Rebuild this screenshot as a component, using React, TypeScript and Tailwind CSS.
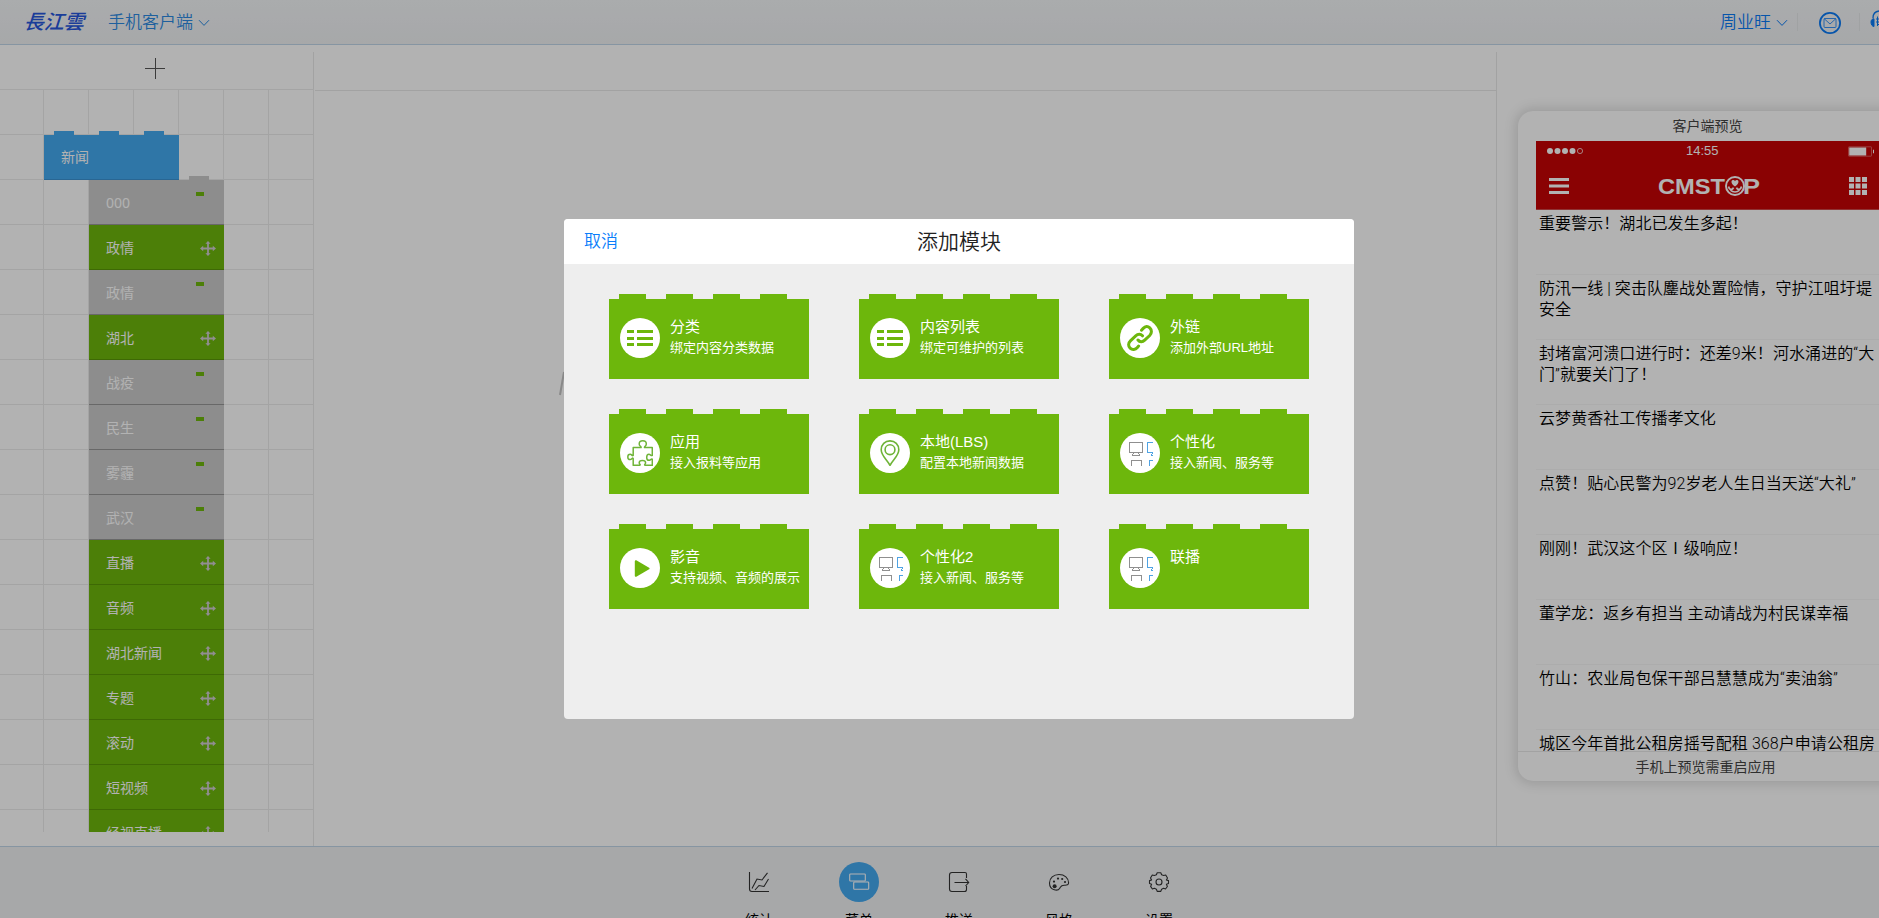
import type { ReactNode } from "react";

const UI_FONT = "font-['Liberation_Sans','Noto_Sans_CJK_SC',sans-serif]";

type MenuItem = { label: string; hidden?: boolean; stud?: boolean };

const menuItems: MenuItem[] = [
  { label: "000", hidden: true, stud: true },
  { label: "政情" },
  { label: "政情", hidden: true },
  { label: "湖北" },
  { label: "战疫", hidden: true },
  { label: "民生", hidden: true },
  { label: "雾霾", hidden: true },
  { label: "武汉", hidden: true },
  { label: "直播" },
  { label: "音频" },
  { label: "湖北新闻" },
  { label: "专题" },
  { label: "滚动" },
  { label: "短视频" },
  { label: "经视直播" },
];

const news = [
  "重要警示！湖北已发生多起！",
  "防汛一线 | 突击队鏖战处置险情，守护江咀圩堤安全",
  "封堵富河溃口进行时：还差9米！河水涌进的“大门”就要关门了！",
  "云梦黄香社工传播孝文化",
  "点赞！贴心民警为92岁老人生日当天送“大礼”",
  "刚刚！武汉这个区Ⅰ级响应！",
  "董学龙：返乡有担当 主动请战为村民谋幸福",
  "竹山：农业局包保干部吕慧慧成为“卖油翁”",
  "城区今年首批公租房摇号配租 368户申请公租房",
];

function Chevron() {
  return (
    <svg width="12" height="8" viewBox="0 0 12 8" fill="none" stroke="currentColor" strokeWidth="1">
      <path d="M1 1.2 L6 6.4 L11 1.2" />
    </svg>
  );
}

function MoveIcon() {
  return (
    <svg width="16" height="15" viewBox="0 0 16 15" className="mt-0.5 text-[#d0cbd0]" fill="currentColor">
      <path d="M8 0 L10.6 2.7 H8.9 V6.6 H12.8 V4.8 L16 7.5 L12.8 10.2 V8.4 H8.9 V12.3 H10.6 L8 15 L5.4 12.3 H7.1 V8.4 H3.2 V10.2 L0 7.5 L3.2 4.8 V6.6 H7.1 V2.7 H5.4 Z" />
    </svg>
  );
}

function ListIcon() {
  return (
    <svg width="26" height="26" viewBox="0 0 26 26" fill="#6db70c">
      <path d="M0 5h7v3H0zM10 5h16v3H10zM0 12h7v3H0zM10 12h16v3H10zM0 18h7v3H0zM10 18h16v3H10z" />
    </svg>
  );
}

function LinkIcon() {
  return (
    <svg width="26" height="26" viewBox="0 0 26 26" fill="none" stroke="#6db70c" strokeWidth="3" strokeLinecap="round">
      <path d="M14.5 5.2 L16.2 3.4 C18.3 1.1 20.8 1 22.8 2.9 C25 5 24.9 8.2 22.7 10.5 L17.7 15.2 C15.6 17.2 12.6 17.1 11 15" />
      <path d="M15.5 10.8 C13.7 8.8 10.8 8.9 8.7 10.8 L3.4 15.8 C1.1 18 1.1 21.2 3.1 23.1 C5.3 25.1 8.3 24.8 10.4 22.4 L11.6 21.1" />
    </svg>
  );
}

function PuzzleIcon() {
  return (
    <svg width="26" height="26" viewBox="0 0 26 26" fill="none" stroke="#6fb438" strokeWidth="1.5" strokeLinejoin="round">
      <path d="M6.2 7.5 H14.1 C14.5 6.3 12.2 6.2 12.2 3.9 C12.2 2 13.8 .8 15.8 .8 C17.8 .8 19.3 2 19.3 3.9 C19.3 6.2 17.2 6.3 17.5 7.5 H25.3 V15.4 C24 16.2 23.6 14.3 21.9 14.3 C20.4 14.3 19.7 15.9 19.7 17.4 C19.7 19 20.5 20.3 21.9 20.3 C23.6 20.3 24 18.5 25.3 19.2 V25.3 H18 C16.8 24.6 18.6 24.1 18.6 22.7 C18.6 21.2 17.2 20.5 15.4 20.5 C13.6 20.5 12.2 21.2 12.2 22.7 C12.2 24.1 14 24.6 12.8 25.3 H6.2 V18.4 C5.2 17.3 4.8 19.6 3.2 19.6 C1.6 19.6 .8 18.4 .8 16.9 C.8 15.3 1.6 14.2 3.2 14.2 C4.8 14.2 5.2 16.4 6.2 15.4 Z" />
    </svg>
  );
}

function PinIcon() {
  return (
    <svg width="26" height="26" viewBox="0 0 26 26" fill="none" stroke="#6fb438" strokeWidth="1.6">
      <path d="M13 25.4 C10.4 20 4.2 15.8 4.2 9.7 C4.2 4.5 8 .9 13 .9 C18 .9 21.8 4.5 21.8 9.7 C21.8 15.8 15.6 20 13 25.4 Z" strokeLinejoin="round" />
      <circle cx="13" cy="9.7" r="4.9" />
    </svg>
  );
}

function ScreensIcon() {
  return (
    <svg width="26" height="26" viewBox="0 0 26 26" fill="none" strokeWidth="1" shapeRendering="crispEdges">
      <g stroke="#8f8f8f">
        <path d="M2.5 2.5 H15.5 V12.5 H2.5 Z M6.5 12.5 V13.5 M11.5 12.5 V13.5 M5.5 13.5 V15.5 H12.5 V13.5 M4.5 26 V20.5 H14.5 V26" />
      </g>
      <g stroke="#4fa3e3">
        <path d="M26 2.5 H20.5 V12.5 H26 M24.5 13.5 H26 M23.5 14.5 H25 M24 15.5 H26 M22.5 26 V20.5 H26" />
      </g>
    </svg>
  );
}

function PlayIcon() {
  return (
    <svg width="26" height="26" viewBox="0 0 26 26" fill="#6db70c" stroke="#6db70c" strokeWidth="2" strokeLinejoin="round">
      <path d="M8.8 6.2 L21.6 13.5 L8.8 20.8 Z" />
    </svg>
  );
}

type Module = { title: string; desc?: string; icon: ReactNode };

const modules: Module[] = [
  { title: "分类", desc: "绑定内容分类数据", icon: <ListIcon /> },
  { title: "内容列表", desc: "绑定可维护的列表", icon: <ListIcon /> },
  { title: "外链", desc: "添加外部URL地址", icon: <LinkIcon /> },
  { title: "应用", desc: "接入报料等应用", icon: <PuzzleIcon /> },
  { title: "本地(LBS)", desc: "配置本地新闻数据", icon: <PinIcon /> },
  { title: "个性化", desc: "接入新闻、服务等", icon: <ScreensIcon /> },
  { title: "影音", desc: "支持视频、音频的展示", icon: <PlayIcon /> },
  { title: "个性化2", desc: "接入新闻、服务等", icon: <ScreensIcon /> },
  { title: "联播", icon: <ScreensIcon /> },
];

function ModuleCard({ title, desc, icon }: Module) {
  return (
    <div className="w-[200px]">
      <div className="flex h-[5px] gap-5 pl-2.5">
        {[0, 1, 2, 3].map((n) => (
          <div key={n} className="w-[27px] bg-[#6db70c]" />
        ))}
      </div>
      <div className="flex h-20 bg-[#6db70c] pt-[19px] pl-[11px] text-white">
        <div className="flex size-10 shrink-0 items-center justify-center rounded-full bg-white">{icon}</div>
        <div className="ml-2.5 whitespace-nowrap">
          <div className="h-[19px] text-[15px] leading-[17px]">{title}</div>
          <div className="mt-0.5 text-[13px] leading-[18px]">{desc}</div>
        </div>
      </div>
    </div>
  );
}

function TopBar() {
  return (
    <header className="flex h-[45px] shrink-0 items-center border-b border-[#c1d6e9] bg-linear-to-b from-[#f4f6f8] to-[#eff1f3]">
      <svg width="64" height="28" viewBox="0 0 64 28" className="ml-[23px]">
        <text x="1" y="21.5" textLength="60" transform="skewX(-4) translate(1 0)" className="fill-[#2857dc] text-[20px] font-medium italic">
          長江雲
        </text>
      </svg>
      <div className="mt-px ml-[21px] flex items-center gap-[5px] text-[17px] leading-6 font-[350] text-[#2b8ae2]">
        <span>手机客户端</span>
        <Chevron />
      </div>
      <div className="mt-px ml-auto flex items-center gap-[5px] text-[17px] leading-6 font-[350] text-[#0a7af5]">
        <span>周业旺</span>
        <Chevron />
      </div>
      <div className="ml-[9px] h-[18px] w-px bg-[#e6e8ea]" />
      <svg width="22" height="22" viewBox="0 0 22 22" fill="none" stroke="#0a7af5" className="mt-0.5 ml-[21px]">
        <circle cx="11" cy="11" r="10.1" strokeWidth="1.8" />
        <rect x="5" y="6.5" width="12" height="9" rx="1" strokeWidth=".8" />
        <path d="M5 6.5 L11 12 L17 6.5" strokeWidth=".8" />
      </svg>
      <div className="ml-[18px] h-[18px] w-px bg-[#e6e8ea]" />
      <svg width="9" height="20" viewBox="0 0 9 20" className="mb-2 ml-[10px]" fill="none" stroke="#0a7af5">
        <path d="M3 10 C3 6 5.5 3.4 9 3" strokeWidth="1.3" />
        <path d="M1 14 C1 12 2.4 10.6 4 10.8 V18.5 C2.4 18.5 1 16.7 1 14 Z" fill="#0a7af5" />
        <path d="M6 11 H9 M6 14 H9 M7 16.5 H9 M7.5 8.5 V18" strokeWidth="1" />
      </svg>
    </header>
  );
}

function MenuPanel() {
  return (
    <aside className="mt-[7px] flex w-[314px] shrink-0 flex-col border-r border-[#e9e9e9]">
      <div className="flex h-[37px] items-start justify-center pt-1.5 pr-[3px]">
        <svg width="20" height="21" viewBox="0 0 20 21" stroke="#555" strokeWidth="1" shapeRendering="crispEdges">
          <path d="M0 10.5 H20 M10.5 0 V21" />
        </svg>
      </div>
      <div className="-mr-px h-[743px] overflow-hidden bg-[linear-gradient(to_right,#ebebeb_1px,transparent_1px),linear-gradient(to_bottom,#ebebeb_1px,transparent_1px)] bg-[length:45px_45px] bg-[position:43px_0px] pt-[42px] pl-11">
        <div className="flex h-1 w-[135px] gap-[25px] pl-2.5">
          <div className="w-5 bg-[#44a9f0]" />
          <div className="w-5 bg-[#44a9f0]" />
          <div className="w-5 bg-[#44a9f0]" />
        </div>
        <div className="flex h-[45px] w-[135px] items-center border-b border-[#3b93d3] bg-[#44a9f0] pl-[17px] text-sm text-white">新闻</div>
        <div className="ml-[45px] w-[135px]">
          {menuItems.map((item, i) => (
            <div
              key={i}
              className={
                item.hidden
                  ? "relative flex h-[45px] items-center justify-between border-b border-[#959595] bg-[#cbcbcb] pt-px pl-[17px] text-sm text-white"
                  : "relative flex h-[45px] items-center justify-between border-b border-[#599708] bg-[#6db70c] pt-px pr-2 pl-[17px] text-sm text-white"
              }
            >
              <span className={item.stud ? "font-['Noto_Sans',sans-serif]" : ""}>{item.label}</span>
              {item.hidden ? (
                <div className="mt-[11px] mr-5 h-1 w-2 self-start bg-[#6db70c]" />
              ) : (
                <MoveIcon />
              )}
              {item.stud && <div className="absolute -top-1 left-[100px] h-1 w-5 bg-[#cbcbcb]" />}
            </div>
          ))}
        </div>
      </div>
    </aside>
  );
}

function PhonePreview() {
  return (
    <aside className="mt-[7px] w-[383px] shrink-0 overflow-hidden border-l border-[#e9e9e9] pt-[59px] pl-[21px]">
      <div className="flex h-[670px] w-[381px] flex-col rounded-[15px] bg-white shadow-[0_0_12px_3px_rgba(0,0,0,0.13)]">
        <div className="h-[30px] pr-0.5 text-center text-sm leading-[31px] text-[#444]">客户端预览</div>
        <div className="mx-[18px] flex h-[69px] shrink-0 flex-col border-b border-[#cf4a4a] bg-[#c60405] text-white">
          <div className="flex h-5 items-center pl-[11px]">
            <svg width="37" height="8" viewBox="0 0 37 8" fill="#fff">
              <circle cx="3" cy="4" r="3" />
              <circle cx="10.5" cy="4" r="3" />
              <circle cx="18" cy="4" r="3" />
              <circle cx="25.5" cy="4" r="3" />
              <circle cx="33" cy="4" r="2.6" fill="none" stroke="#fff" strokeWidth=".7" />
            </svg>
            <span className="ml-[102px] text-[13px] leading-5">14:55</span>
            <svg width="27" height="11" viewBox="0 0 27 11" className="ml-auto mr-[6px]">
              <rect x=".5" y=".8" width="23" height="9.4" rx=".5" fill="none" stroke="#e58080" strokeWidth=".7" />
              <rect x="1.2" y="1.5" width="17" height="8" fill="#fff" />
              <path d="M25 3.8 h1 v3.4 h-1 z" fill="#fff" />
            </svg>
          </div>
          <div className="flex items-center justify-between pt-[14px] pr-[14px] pl-[13px]">
            <svg width="20" height="17" viewBox="0 0 20 17" fill="#fff">
              <path d="M0 0h20v3H0zM0 6.5h20v3H0zM0 13h20v3H0z" />
            </svg>
            <svg width="102" height="22" viewBox="0 0 102 22">
              <text x="0" y="19" textLength="67" lengthAdjust="spacingAndGlyphs" className="fill-white text-[22px] font-bold font-['Liberation_Sans']">
                CMST
              </text>
              <text x="85" y="19" textLength="17" lengthAdjust="spacingAndGlyphs" className="fill-white text-[22px] font-bold font-['Liberation_Sans']">
                P
              </text>
              <circle cx="77" cy="11" r="9" fill="none" stroke="#fff" strokeWidth="2" />
              <path d="M77 11.6 C73 8.8 72.6 5.4 75 5 C76.3 4.8 77 6 77 6.4 C77 6 77.8 4.8 79 5 C81.4 5.4 81 8.8 77 11.6 Z" fill="#fff" />
              <path d="M70.8 11.5 C70.8 15 74.5 15.2 75.5 12.6 M83.2 11.5 C83.2 15 79.5 15.2 78.5 12.6 M72.5 15.2 C75 17.6 79 17.6 81.5 15.2" fill="none" stroke="#fff" strokeWidth="1.7" />
            </svg>
            <svg width="18" height="18" viewBox="0 0 18 18" fill="#fff">
              <path d="M0 0h5v5H0zM6.5 0h5v5h-5zM13 0h5v5h-5zM0 6.5h5v5H0zM6.5 6.5h5v5h-5zM13 6.5h5v5h-5zM0 13h5v5H0zM6.5 13h5v5h-5zM13 13h5v5h-5z" />
            </svg>
          </div>
        </div>
        <div className="mx-[18px] h-[541px] shrink-0 overflow-hidden font-['Roboto','Noto_Sans_CJK_SC',sans-serif]">
          {news.map((title) => (
            <div key={title} className="h-[65px] border-b border-[#f6f6f6] pt-[3px] pr-px pl-[3px] text-base leading-[21px] font-[350] tracking-[0.07px] text-black">
              {title}
            </div>
          ))}
        </div>
        <div className="h-[30px] border-t border-[#e8e8e8] pr-1.5 text-center text-sm leading-[30px] text-[#444]">
          手机上预览需重启应用
        </div>
      </div>
    </aside>
  );
}

type Tab = { label: string; active?: boolean; icon: ReactNode };

const tabs: Tab[] = [
  {
    label: "统计",
    icon: <path d="M.5 0 V17 Q.5 19.5 3 19.5 H20 M3 16.5 L8 7 L13 8 L18.5 .8 M6 18 L10 13.5 L15 14.5 L19.5 7" />,
  },
  {
    label: "菜单",
    active: true,
    icon: (
      <g>
        <rect x=".7" y="2" width="15.6" height="7" rx=".8" />
        <rect x="4.7" y="10" width="15" height="7.2" rx=".8" />
      </g>
    ),
  },
  {
    label: "推送",
    icon: <path d="M17.5 6 V2 Q17.5 .5 16 .5 H3 Q.5 .5 .5 3 V17 Q.5 19.5 3 19.5 H15.5 Q17.5 19.5 17.5 17.5 V14 M5.5 10.5 H19.5 M16.5 6.8 L19.7 10.5 L16.5 14" />,
  },
  {
    label: "风格",
    icon: (
      <g>
        <path d="M10 2.5 C15.5 2.5 19.6 6 19.6 10.8 C19.6 12.9 18 13.3 15.5 13.2 C12 13 12 14.3 10.8 16.2 C9.5 18.3 7.4 18.4 5.3 17.8 C2 16.8 .5 13.7 .5 11 C.5 6 4.5 2.5 10 2.5 Z" />
        <g fill="currentColor" stroke="none">
          <circle cx="5.6" cy="14.2" r="2" />
          <circle cx="5" cy="9.6" r="1.1" />
          <circle cx="9" cy="6.6" r="1.1" />
          <circle cx="13.2" cy="7" r="1.1" />
          <circle cx="16" cy="10" r="1.1" />
        </g>
      </g>
    ),
  },
  {
    label: "设置",
    icon: (
      <g>
        <circle cx="10" cy="10" r="3" />
        <path d="M8.2 .8 H11.8 L12.6 2.8 L14.7 3.5 L16.7 3 L18.5 6 L17.4 8 L19.5 8.6 V11.5 L17.4 12.2 L18.4 14.5 L16.5 17 L14.6 16.3 L12.6 17.2 L11.8 19.4 H8.2 L7.4 17.2 L5.4 16.3 L3.4 17 L1.6 14.4 L2.6 12.2 L.5 11.5 V8.6 L2.6 8 L1.5 6 L3.3 3 L5.3 3.5 L7.4 2.8 Z" strokeLinejoin="round" />
      </g>
    ),
  },
];

function BottomBar() {
  return (
    <footer className="flex h-[72px] w-[1918px] shrink-0 justify-center overflow-hidden border-t border-[#c1d6e9] bg-[#eff1f3]">
      {tabs.map((tab) => (
        <div key={tab.label} className="flex w-[100px] shrink-0 flex-col items-center pt-[15px]">
          <div
            className={
              tab.active
                ? "flex size-10 shrink-0 items-center justify-center rounded-full bg-[#44a9f0] text-white"
                : "flex size-10 shrink-0 items-center justify-center text-[#333]"
            }
          >
            <svg width="20" height="20" viewBox="0 0 20 20" fill="none" stroke="currentColor" strokeWidth="1.1" overflow="visible">
              {tab.icon}
            </svg>
          </div>
          <div className="mt-2 shrink-0 text-sm leading-5 text-black">{tab.label}</div>
        </div>
      ))}
    </footer>
  );
}

export default function App() {
  return (
    <div className={`relative flex h-screen w-full flex-col overflow-hidden bg-white ${UI_FONT}`}>
      <TopBar />
      <div className="flex min-h-0 flex-1">
        <MenuPanel />
        <main className="mt-[7px] ml-px flex min-w-0 flex-1 flex-col">
          <div className="h-[39px] border-b border-[#e9e9e9]" />
          <svg width="12" height="26" viewBox="0 0 12 26" className="mt-[279px] ml-[242px]" fill="none" stroke="#c4c4c4" strokeWidth="2">
            <path d="M3 25 L7 2" />
          </svg>
        </main>
        <PhonePreview />
      </div>
      <BottomBar />

      <div className="absolute inset-y-0 left-0 flex w-[1918px] justify-center bg-black/30 pt-[219px]">
        <section className="h-[500px] w-[790px] overflow-hidden rounded bg-[#eee]">
          <div className="grid h-[45px] grid-cols-3 items-center bg-white px-5 font-[350]">
            <button className="mt-px justify-self-start text-[17px] leading-6 text-[#0a7efb]">取消</button>
            <h2 className="text-center text-[21px] leading-7 text-[#222]">添加模块</h2>
          </div>
          <div className="grid grid-cols-[200px_200px_200px] gap-x-[50px] gap-y-[30px] pt-[30px] pl-[45px]">
            {modules.map((m) => (
              <ModuleCard key={m.title} {...m} />
            ))}
          </div>
        </section>
      </div>
    </div>
  );
}
